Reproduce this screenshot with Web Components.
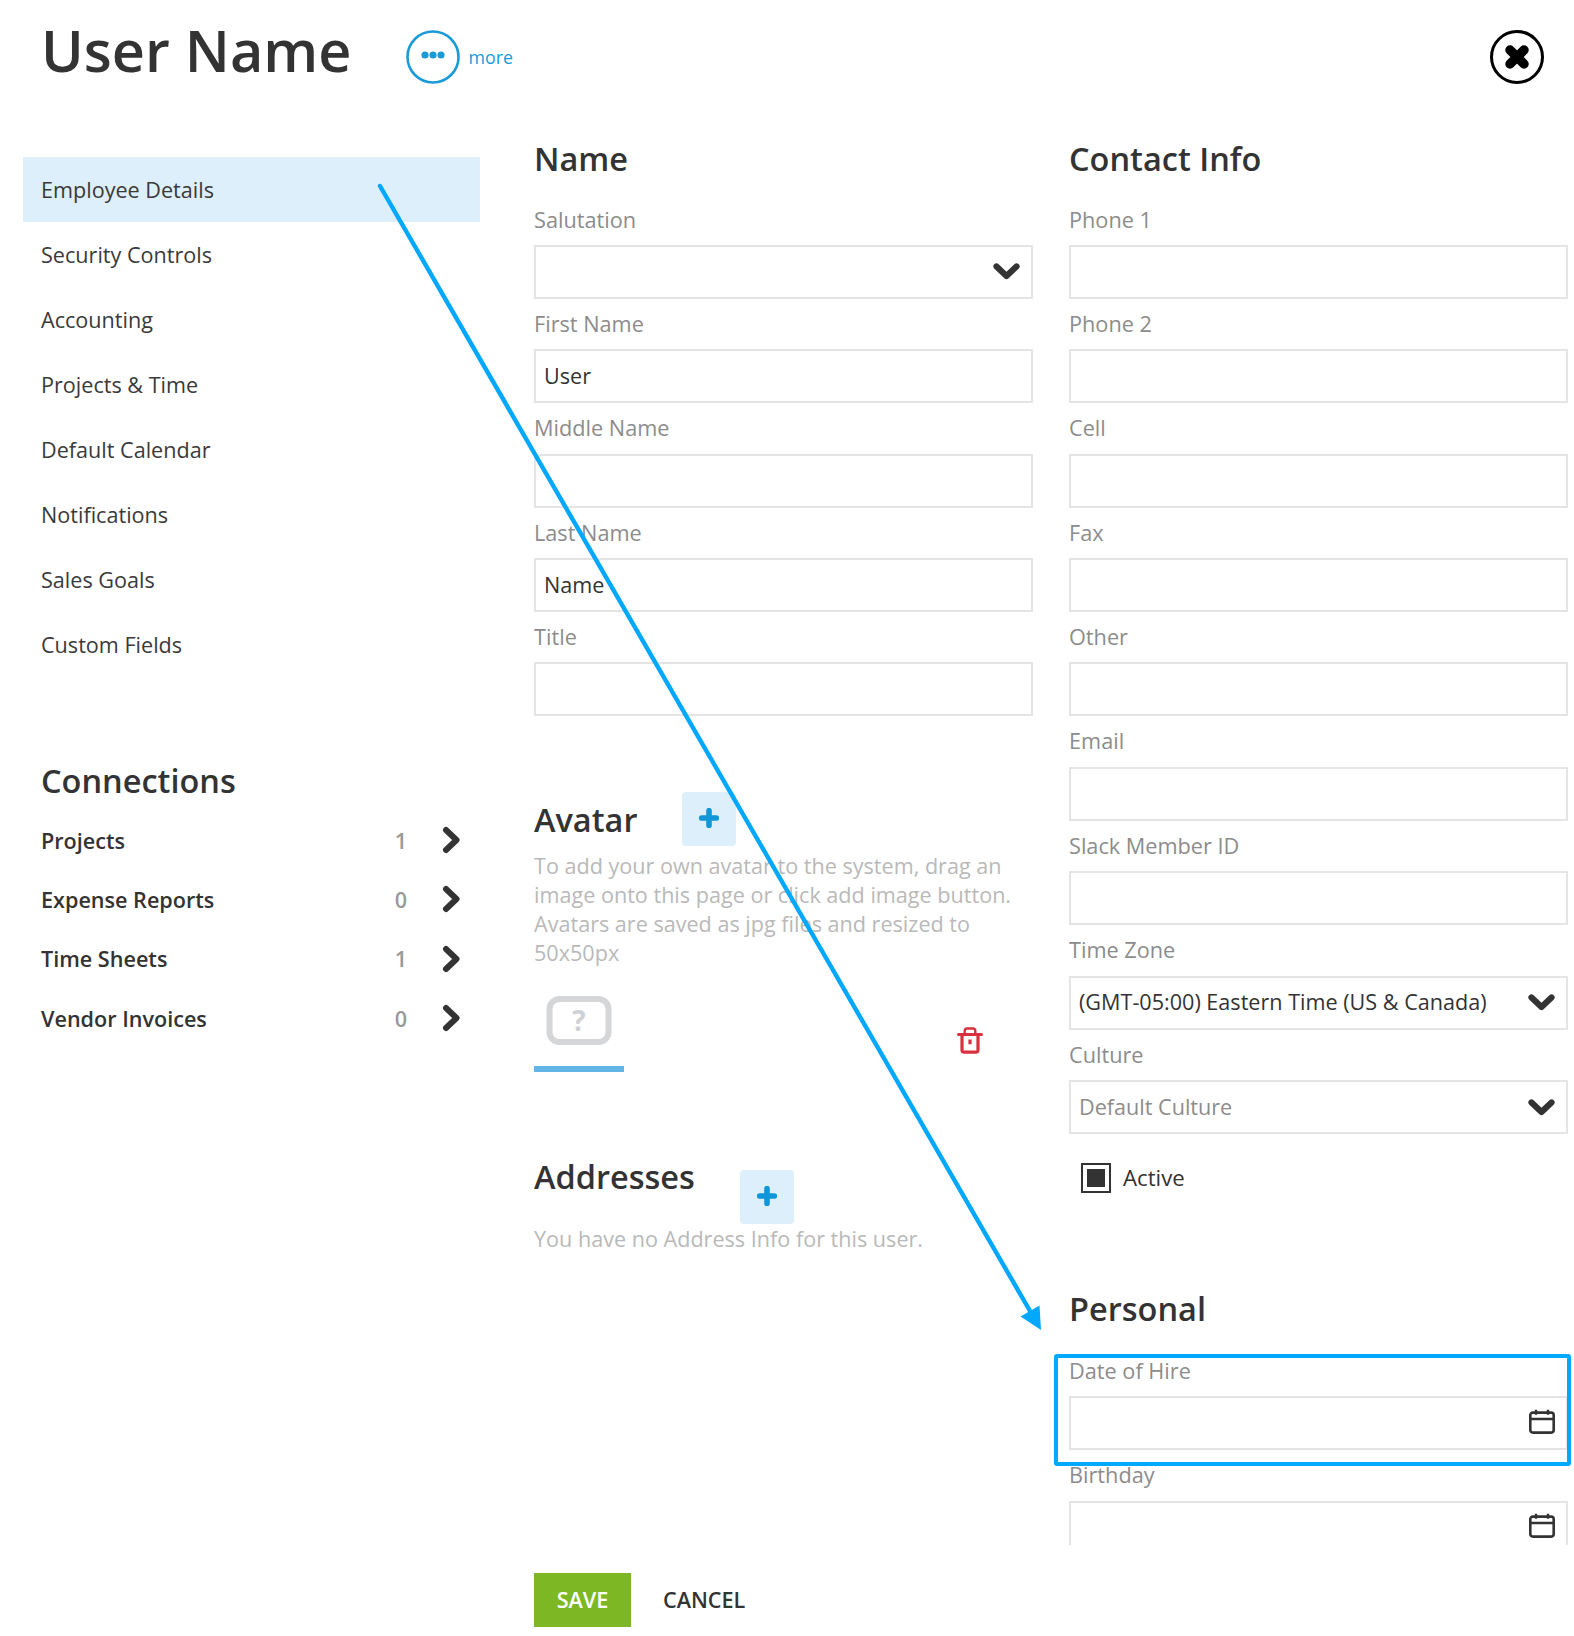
<!DOCTYPE html>
<html lang="en"><head><meta charset="utf-8"><title>User Name</title>
<style>
html,body{margin:0;padding:0;background:#fff}
body{font-family:"Open Sans","Noto Sans",sans-serif;color:#333}
</style></head>
<body>
<app-page>
  <page-header slot="header" title="User Name"></page-header>
  <side-nav slot="side" active="Employee Details" items="Employee Details|Security Controls|Accounting|Projects &amp; Time|Default Calendar|Notifications|Sales Goals|Custom Fields">
    <section-title style="margin:75px 0 0 18px">Connections</section-title>
    <conn-row count="1" style="margin-top:2px">Projects</conn-row>
    <conn-row count="0">Expense Reports</conn-row>
    <conn-row count="1">Time Sheets</conn-row>
    <conn-row count="0">Vendor Invoices</conn-row>
  </side-nav>
  <form-column slot="col1">
    <section-title>Name</section-title>
    <form-field style="margin-top:7.500px" label="Salutation" kind="select"></form-field>
    <form-field label="First Name" value="User"></form-field>
    <form-field label="Middle Name"></form-field>
    <form-field label="Last Name" value="Name"></form-field>
    <form-field label="Title"></form-field>
    <avatar-panel></avatar-panel>
    <address-panel></address-panel>
  </form-column>
  <form-column slot="col2">
    <section-title>Contact Info</section-title>
    <form-field style="margin-top:7.500px" label="Phone 1"></form-field>
    <form-field label="Phone 2"></form-field>
    <form-field label="Cell"></form-field>
    <form-field label="Fax"></form-field>
    <form-field label="Other"></form-field>
    <form-field label="Email"></form-field>
    <form-field label="Slack Member ID"></form-field>
    <form-field label="Time Zone" kind="select" value="(GMT-05:00) Eastern Time (US &amp; Canada)"></form-field>
    <form-field label="Culture" kind="select" value="Default Culture" muted></form-field>
    <check-row>Active</check-row>
    <section-title style="margin-top:87px">Personal</section-title>
    <form-field style="margin-top:9px" label="Date of Hire" kind="date"></form-field>
    <form-field label="Birthday" kind="date"></form-field>
  </form-column>
  <page-footer slot="footer"></page-footer>
  <note-overlay slot="overlay"></note-overlay>
</app-page>
<script>
const def=(name,css,html)=>customElements.define(name,class extends HTMLElement{
  connectedCallback(){ if(this.shadowRoot) return;
    const r=this.attachShadow({mode:'open'});
    r.innerHTML='<style>'+css+'</style>'+(typeof html==='function'?html(this):html);
  }
});
const esc=s=>(s||'').replace(/&/g,'&amp;').replace(/</g,'&lt;');
const chevDown='<svg width="27" height="17" viewBox="0 0 27 17"><path d="M3.500 3.500 13.500 13 23.500 3.500" fill="none" stroke="#333" stroke-width="6.200" stroke-linecap="round" stroke-linejoin="round"/></svg>';
const cal='<svg class="cal" width="26" height="25" viewBox="0 0 26 25"><rect x="1.300" y="3.600" width="23.400" height="20" rx="2.500" fill="none" stroke="#333" stroke-width="2.600"/><path d="M1 10h24M7 .8v5M19 .8v5" stroke="#333" stroke-width="2.400" fill="none"/></svg>';

def('app-page',`
 :host{display:grid;position:relative;width:1574px;height:1636px;overflow:hidden;
   grid-template-columns:23px 457px 54px 499px 36px 499px 6px;grid-template-rows:130px 1415px 91px}
 .h{grid-column:1/-1;grid-row:1}
 .s{grid-column:2;grid-row:2;overflow:hidden}
 .a{grid-column:4;grid-row:2;overflow:hidden}
 .b{grid-column:6;grid-row:2;overflow:hidden}
 .f{grid-column:4/-1;grid-row:3}
`,`<div class="h"><slot name="header"></slot></div><div class="s"><slot name="side"></slot></div>
<div class="a"><slot name="col1"></slot></div><div class="b"><slot name="col2"></slot></div>
<div class="f"><slot name="footer"></slot></div><slot name="overlay"></slot>`);

def('page-header',`
 :host{display:flex;height:130px;box-sizing:border-box;padding:0 30px 0 41px;align-items:flex-start}
 h1{margin:0;font:600 57.600px/100px "Open Sans",sans-serif;color:#333;height:100px}
 .more{display:flex;align-items:center;margin:30px 0 0 55px;gap:8px;color:#1a9bd7;font:400 17.800px/54px "Open Sans",sans-serif}
 .x{margin:30px 0 0 auto;width:54px;height:54px}
 svg{display:block}
`,el=>`<h1>${esc(el.getAttribute('title'))}</h1>
<div class="more"><svg width="54" height="54" viewBox="0 0 54 54"><circle cx="27" cy="27" r="25.500" fill="none" stroke="#1a9bd7" stroke-width="2.600"/><circle cx="19" cy="25" r="3.600" fill="#1a9bd7"/><circle cx="27" cy="25" r="3.600" fill="#1a9bd7"/><circle cx="35" cy="25" r="3.600" fill="#1a9bd7"/></svg><span>more</span></div>
<div class="x"><svg width="54" height="54" viewBox="0 0 54 54"><circle cx="27" cy="27" r="25.500" fill="none" stroke="#000" stroke-width="3"/><path d="M20 20 34 34M34 20 20 34" stroke="#000" stroke-width="9.500" stroke-linecap="round"/></svg></div>`);

def('side-nav',`
 :host{display:block;padding-top:26.500px}
 ul{list-style:none;margin:0;padding:0}
 li{height:65px;padding-left:18px;font:400 21.600px/65px "Open Sans",sans-serif;color:#3a3a3a}
 li.on{background:#ddeffa}
`,el=>{const act=el.getAttribute('active');return '<ul>'+el.getAttribute('items').split('|').map(t=>`<li class="${t===act?'on':''}">${esc(t)}</li>`).join('')+'</ul><slot></slot>';});

def('section-title',`
 :host{display:block;font:600 32.500px/57px "Open Sans",sans-serif;color:#333}
`,'<slot></slot>');

def('conn-row',`
 :host{display:grid;grid-template-columns:342px 36px 36px;height:59.300px;align-items:center;padding-left:18px;font:600 21.600px/59px "Open Sans",sans-serif;color:#333}
 .n{color:#999;text-align:center}
 svg{display:block;margin:0 0 0 22.500px}
`,el=>`<span><slot></slot></span><span class="n">${el.getAttribute('count')}</span>
<svg width="20" height="28" viewBox="0 0 20 28"><path d="M4 4 14.500 14 4 24" fill="none" stroke="#333" stroke-width="6" stroke-linecap="round" stroke-linejoin="round"/></svg>`);

def('form-column',`:host{display:block}`,'<slot></slot>');

def('form-field',`
 :host{display:block;width:499px}
 label{display:block;height:50.400px;font:400 21.700px/50.400px "Open Sans",sans-serif;color:#8c8c8c}
 .box{height:54px;box-sizing:border-box;border:2px solid #e4e4e4;display:flex;align-items:center;justify-content:space-between;padding:0 11px 0 8px;font:400 21.600px/50px "Open Sans",sans-serif;color:#333;background:#fff}
 .v{padding-bottom:1px;height:44px;line-height:44px}
 .muted{color:#8c8c8c}
 svg{display:block;flex:none;margin-left:auto}
 .cal{margin-bottom:4px}
`,el=>{const k=el.getAttribute('kind');const v=el.getAttribute('value')||'';
 return `<label>${esc(el.getAttribute('label'))}</label><div class="box"><span class="v ${el.hasAttribute('muted')?'muted':''}">${esc(v)}</span>${k==='select'?chevDown:k==='date'?cal:''}</div>`;});

def('add-button',`
 :host{display:flex;width:54px;height:54px;flex:none;border-radius:4px;background:#ddeffa;align-items:center;justify-content:center}
 svg{display:block;margin-bottom:2px}
`,'<svg width="20" height="20" viewBox="0 0 20 20"><path d="M10 2.600v14.800M2.600 10h14.800" stroke="#0f97d9" stroke-width="5.600" stroke-linecap="round"/></svg>');

def('avatar-panel',`
 :host{display:block;margin-top:74.500px}
 .t{display:flex;align-items:flex-start;gap:45px;height:57px}
 add-button{margin-top:1.500px}
 p{margin:3px 0 0;font:400 21.600px/29px "Open Sans",sans-serif;color:#b9b9b9}
 .r{display:flex;justify-content:space-between;margin-top:28.500px;height:77px}
 .tile{width:90px;height:77px;display:flex;flex-direction:column;align-items:center}
 .tile svg{margin-top:1px}
 .bar{width:90px;height:6px;background:#63b5e6;margin-top:21px}
 .tr{margin:32px 49px 0 0}
 svg{display:block}
`,`<div class="t"><section-title>Avatar</section-title><add-button></add-button></div>
<p>To add your own avatar to the system, drag an<br>image onto this page or click add image button.<br>Avatars are saved as jpg files and resized to<br>50x50px</p>
<div class="r"><div class="tile"><svg width="66" height="49" viewBox="0 0 66 49"><rect x="3.500" y="3" width="59" height="43" rx="10" fill="#fff" stroke="#d4d6d8" stroke-width="6"/><text x="33" y="34.500" text-anchor="middle" font-family="Open Sans,sans-serif" font-weight="700" font-size="28" fill="#cfd1d3">?</text></svg><div class="bar"></div></div>
<svg class="tr" width="28" height="27" viewBox="0 0 28 27"><path d="M2.600 7.500h22.800" stroke="#d9303e" stroke-width="3.200" stroke-linecap="round"/><path d="M8.700 7V4Q8.700 1.500 11 1.500h6Q19.300 1.500 19.300 4V7" fill="none" stroke="#d9303e" stroke-width="2.400"/><path d="M6 8v15q0 2.200 2.200 2.200h11.600q2.200 0 2.200-2.200V8" fill="none" stroke="#d9303e" stroke-width="3.200"/><path d="M14 12.500v4.800" stroke="#d9303e" stroke-width="3.200"/></svg></div>`);

def('address-panel',`
 :host{display:block;margin-top:76px}
 .t{display:flex;align-items:flex-start;gap:45px}
 add-button{margin-top:21.500px}
 p{margin:0;font:400 21.600px/29px "Open Sans",sans-serif;color:#b9b9b9}
`,`<div class="t"><section-title>Addresses</section-title><add-button></add-button></div><p>You have no Address Info for this user.</p>`);

def('check-row',`
 :host{display:flex;align-items:center;margin:28.900px 0 0 12px;height:30px;gap:12px;font:400 22.200px/30px "Open Sans",sans-serif;color:#333}
 .c{width:30px;height:30px;box-sizing:border-box;border:2px solid #333;padding:4px}
 .c i{display:block;width:100%;height:100%;background:#333}
`,`<div class="c"><i></i></div><slot></slot>`);

def('page-footer',`
 :host{display:flex;align-items:center;padding-top:28px;height:54px;gap:32px;font:600 21.600px/54px "Open Sans",sans-serif}
 .s{width:97px;height:54px;background:#7db824;color:#fff;text-align:center}
 .c{color:#333}
`,`<div class="s">SAVE</div><div class="c">CANCEL</div>`);

def('note-overlay',`
 :host{position:absolute;inset:0;pointer-events:none;display:block}
 svg{display:block;position:absolute;left:0;top:0}
`,`<svg width="1574" height="1636" viewBox="0 0 1574 1636">
 <path d="M380 186 1030 1311" stroke="#00a8ff" stroke-width="4.400" stroke-linecap="round" fill="none"/>
 <polygon points="1041,1330 1020.500,1316.500 1039.500,1305.500" fill="#00a8ff"/>
 <rect x="1056" y="1356" width="513" height="108" rx="1" fill="none" stroke="#00a8ff" stroke-width="4"/>
</svg>`);
</script>
</body></html>
